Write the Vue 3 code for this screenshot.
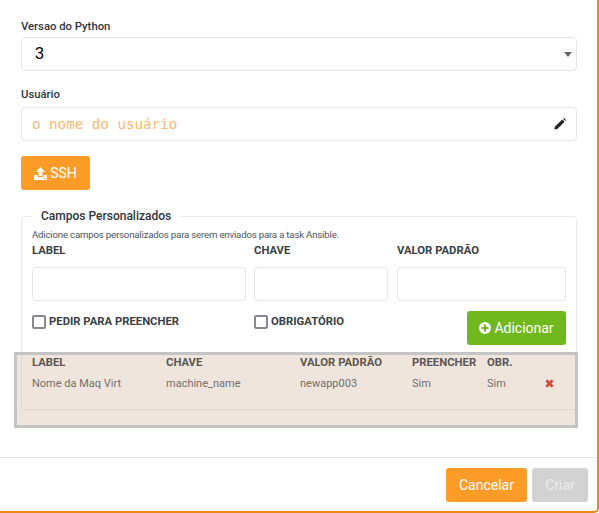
<script setup>
// Ansible task modal, custom fields section
const columns = ['LABEL', 'CHAVE', 'VALOR PADRÃO', 'PREENCHER', 'OBR.']
const rows = [{ label: 'Nome da Maq Virt', key: 'machine_name', value: 'newapp003', fill: 'Sim', req: 'Sim' }]
</script>

<template>
  <div class="modal">
    <div class="modal-body">
      <div class="field">
        <label class="f-label">Versao do Python</label>
        <div class="select">
          <span>3</span>
          <span class="caret" />
        </div>
      </div>
      <div class="field user">
        <label class="f-label">Usuário</label>
        <div class="input-box">
          <span class="placeholder">o nome do usuário</span>
          <svg class="pencil" width="12" height="12" viewBox="0 0 12 12">
            <path fill="#26262e" d="M0.4 11.6L1 8.6 8.2 1.4 10.6 3.8 3.4 11z" />
            <path fill="#26262e" d="M9 .6L10 0 12 2 11.4 3z" />
          </svg>
        </div>
      </div>
      <button class="btn btn-orange ssh">
        <svg width="13" height="13" viewBox="0 0 13 13">
          <path fill="#fff" d="M6.5 0L11 5H8.3V9H4.7V5H2zM0 8H3.5V10H9.5V8H13V13H0z" />
          <path fill="#ff9c28" d="M9.5 11h1v1h-1zM11.2 11h1v1h-1z" />
        </svg>
        SSH
      </button>

      <fieldset class="custom">
        <legend>Campos Personalizados</legend>
        <p class="help">Adicione campos personalizados para serem enviados para a task Ansible.</p>
        <div class="add-grid">
          <div class="col-a">
            <div class="caps">LABEL</div>
            <div class="blank" />
          </div>
          <div class="col-b">
            <div class="caps">CHAVE</div>
            <div class="blank" />
          </div>
          <div>
            <div class="caps">VALOR PADRÃO</div>
            <div class="blank" />
          </div>
          <div class="check caps"><span class="box" />PEDIR PARA PREENCHER</div>
          <div class="check caps"><span class="box" />OBRIGATÓRIO</div>
          <div class="add-cell">
            <button class="btn btn-green">
              <svg width="12" height="12" viewBox="0 0 24 24"><circle cx="12" cy="12" r="12" fill="#fff" /><path fill="#6fb91f" d="M10 5h4v5h5v4h-5v5h-4v-5H5v-4h5z" /></svg>
              Adicionar
            </button>
          </div>
        </div>
        <div class="t-grid t-head caps">
          <span v-for="c in columns" :key="c">{{ c }}</span>
        </div>
        <div v-for="r in rows" :key="r.key" class="t-grid t-row">
          <span>{{ r.label }}</span>
          <span>{{ r.key }}</span>
          <span>{{ r.value }}</span>
          <span>{{ r.fill }}</span>
          <span>{{ r.req }}</span>
          <svg class="del" width="9" height="9" viewBox="0 0 10 10"><path d="M1.5 1.5l7 7M8.5 1.5l-7 7" stroke="#d9352c" stroke-width="3.2" /></svg>
        </div>
      </fieldset>
    </div>

    <div class="modal-foot">
      <button class="btn btn-orange cancel">Cancelar</button>
      <button class="btn btn-off">Criar</button>
    </div>

    <div class="highlight" />
  </div>
</template>

<style scoped>
.modal { position: relative; box-sizing: border-box; width: 599px; height: 513px; background: #fff; border-right: 2px solid #e8871e; border-bottom: 2px solid #e8871e; border-bottom-right-radius: 5px; font-family: Roboto, "Liberation Sans", sans-serif; color: #3a3f45; overflow: hidden; }
.modal-body { padding: 20px 20px 0 21px; height: 437px; box-sizing: border-box; }
.f-label { display: block; font-size: 11.3px; font-weight: 500; line-height: 13px; color: #2f353b; margin-bottom: 4px; }
.select, .input-box { box-sizing: border-box; height: 34px; width: 556px; border: 1px solid #e6e6e6; border-radius: 4px; display: flex; align-items: center; justify-content: space-between; }
.select { padding: 0 4px 0 13px; font-family: "Liberation Sans", sans-serif; font-size: 16px; color: #000; }
.caret { width: 0; height: 0; border: 4px solid transparent; border-top: 5px solid #666; border-bottom: 0; }
.user { margin-top: 17px; }
.user .f-label { margin-bottom: 6px; }
.input-box { padding: 0 10px 0 10px; }
.placeholder { font-family: "DejaVu Sans Mono", monospace; font-size: 14.2px; color: #ffb870; }
.btn { border: 0; border-radius: 3px; height: 34px; color: #fff; font-family: inherit; font-size: 14px; display: inline-flex; align-items: center; justify-content: center; gap: 3px; padding: 0; }
.btn-orange { background: #ff9c28; }
.btn-green { background: #6fb91f; width: 99px; }
.btn-off { background: #d2d2d2; color: #ececec; width: 56px; }
.ssh { width: 69px; margin-top: 15px; display: flex; }
.custom { margin: 18px 0 0; padding: 0 10px; width: 556px; height: 202px; box-sizing: border-box; border: 1px solid #ebebeb; border-radius: 4px; }
legend { font-size: 12px; font-weight: 500; line-height: 16px; color: #2f353b; padding: 0 9px; }
.help { margin: 5px 0 0; font-size: 9.7px; letter-spacing: -0.21px; line-height: 12px; color: #4d5560; }
.caps { font-size: 11.3px; font-weight: 700; line-height: 13px; color: #3a3f45; }
.add-grid { display: grid; grid-template-columns: 222px 143px 169px; margin-top: 3px; }
.col-a .blank { margin-right: 8px; }
.col-b .blank { margin-right: 9px; }
.blank { box-sizing: border-box; height: 34px; margin-top: 10px; border: 1px solid #e6e6e6; border-radius: 4px; }
.check { display: flex; align-items: flex-start; gap: 3px; margin-top: 14px; }
.box { box-sizing: border-box; width: 14px; height: 14px; border: 2px solid #8a8794; border-radius: 2px; }
.add-cell { display: flex; justify-content: flex-end; margin-top: 10px; }
.t-grid { display: grid; grid-template-columns: 134px 134px 112px 75px 59px 12px; align-items: center; }
.t-head { margin-top: 11px; }
.t-row { margin-top: 8px; font-size: 11px; line-height: 13px; color: #5a6068; }
.del { justify-self: start; margin-left: -1px; }
.modal-foot { box-sizing: border-box; height: 74px; margin-top: 20px; border-top: 1px solid #e5e5e5; padding: 10px 9px 0 0; display: flex; justify-content: flex-end; gap: 5px; }
.cancel { width: 81px; }
.highlight { position: absolute; left: 14px; top: 352px; width: 564px; height: 76px; box-sizing: border-box; border: 3px solid #c4c4c4; background: rgba(190, 150, 120, 0.25); }
</style>
